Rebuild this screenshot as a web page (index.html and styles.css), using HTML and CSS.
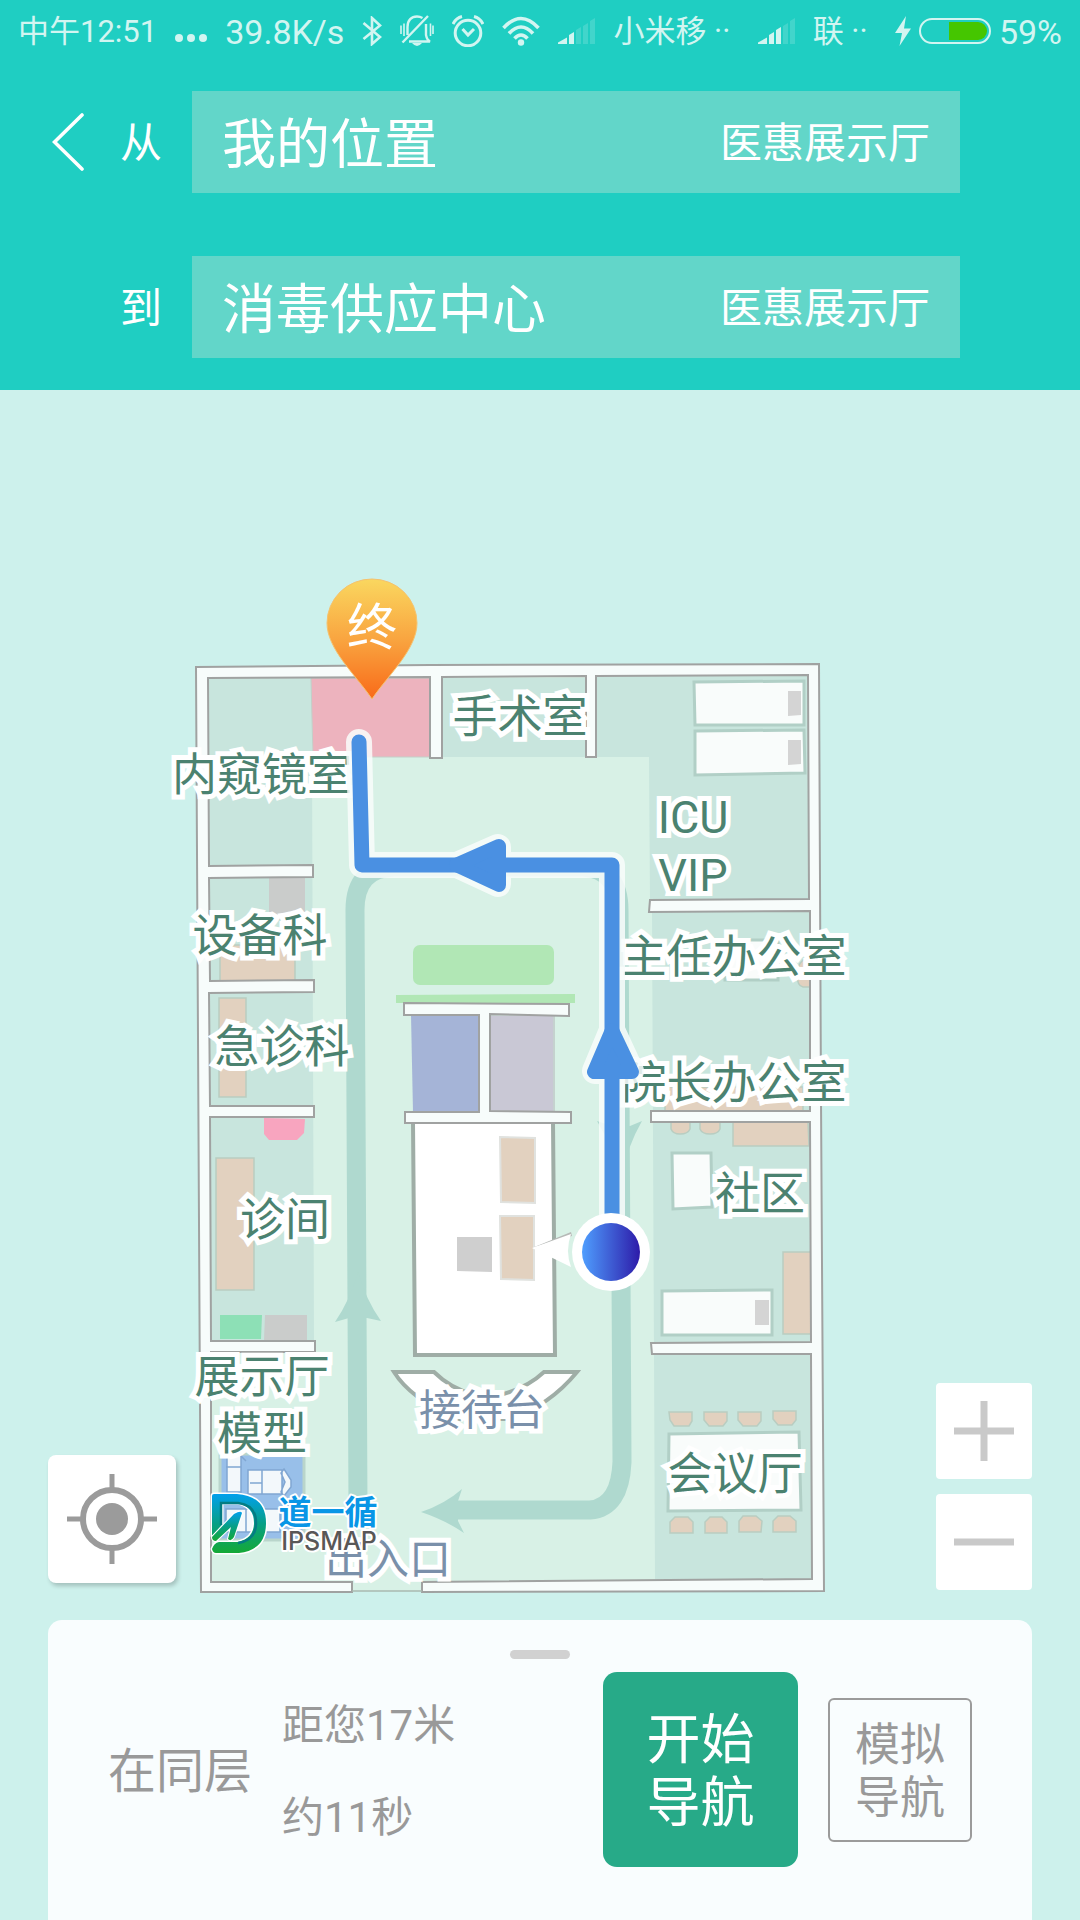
FILE: index.html
```html
<!DOCTYPE html>
<html lang="zh-CN">
<head>
<meta charset="utf-8">
<meta name="viewport" content="width=device-width, initial-scale=1">
<title>室内导航</title>
<link rel="stylesheet" href="styles.css">
</head>
<body>
<div class="app">
  <header class="header">
    <div class="status">
      <div class="status-group">
        <span>中午12:51</span>
        <svg class="icon-dots" viewBox="0 0 32 30" aria-hidden="true"><circle cx="4" cy="22" r="4"/><circle cx="16" cy="22" r="4"/><circle cx="28" cy="22" r="4"/></svg>
        <span class="num">39.8K/s</span>
        <svg class="icon-bt" viewBox="0 0 20 30" fill="none" stroke="currentColor" stroke-width="2.6" aria-hidden="true"><path d="M1.500 7L18 21L10 28V2L18 9.500L1.500 23"/></svg>
        <svg class="icon-bell" viewBox="0 0 34 32" fill="none" stroke="currentColor" stroke-width="2.400" aria-hidden="true"><path d="M2.500 27.500L28 1M7.500 20V12C7.500 5 11.500 1.500 17 1.500Q20 1.500 22.500 3M26 9V20Q27 25 30 26.500H9"/><path d="M1 10.500V19M4 8.500V21M30.500 8.500V21M33 10.500V19" stroke-width="1.600"/><path d="M12 28H22Q17 34 12 28" fill="currentColor" stroke="none"/></svg>
        <svg class="icon-alarm" viewBox="0 0 32 32" fill="none" stroke="currentColor" stroke-width="3" aria-hidden="true"><circle cx="16" cy="18" r="12.800"/><path d="M10.500 14L16 20L22 14M1 9Q4 3 10 1.500M31 9Q28 3 22 1.500"/></svg>
        <svg class="icon-wifi" viewBox="0 0 38 30" fill="none" stroke="currentColor" stroke-width="3.600" aria-hidden="true"><path d="M1.500 12Q19-7 36.500 12M7 17.500Q19 4.500 31 17.500M12.500 22.500Q19 15.500 25.500 22.500"/><circle cx="19" cy="26.500" r="3.200" fill="currentColor" stroke="none"/></svg>
        <svg class="icon-signal" viewBox="0 0 37 26" aria-hidden="true"><path d="M0 26L0 24.500L9 19.500V26ZM11 17L16 14V26H11Z"/><path opacity=".2" d="M18 12L23 9V26H18ZM25 8L30 5V26H25ZM32 3L37 0V26H32Z"/></svg>
        <span>小米移 ··</span>
      </div>
      <div class="status-group">
        <svg class="icon-signal" viewBox="0 0 37 26" aria-hidden="true"><path d="M0 26L0 24.500L9 19.500V26ZM11 17L16 14V26H11ZM18 12L23 9V26H18Z"/><path opacity=".2" d="M25 8L30 5V26H25ZM32 3L37 0V26H32Z"/></svg>
        <span>联 ··</span>
      </div>
      <div class="status-group power">
        <svg class="icon-bolt" viewBox="0 0 16 30" aria-hidden="true"><path d="M11 0L0 17H7L4.500 30L16 12.500H9Z"/></svg>
        <svg class="icon-battery" viewBox="0 0 72 26" aria-hidden="true"><rect x="1" y="1" width="70" height="24" rx="12" fill="none" stroke="currentColor" stroke-width="2"/><path d="M30 4H59A9 9 0 0 1 59 22H30Z" fill="#45c600"/></svg>
        <span class="num">59%</span>
      </div>
    </div>
    <form class="search">
      <div class="search-row">
        <button class="back" type="button" aria-label="返回"><svg viewBox="0 0 32 58" fill="none" stroke="currentColor" stroke-width="3.600" stroke-linecap="round"><path d="M30 2L2.500 29L30 56"/></svg></button>
        <label for="from">从</label>
        <div class="field"><input id="from" type="text" value="我的位置"><span>医惠展示厅</span></div>
      </div>
      <div class="search-row">
        <label for="to">到</label>
        <div class="field"><input id="to" type="text" value="消毒供应中心"><span>医惠展示厅</span></div>
      </div>
    </form>
  </header>

  <main class="map">
    <svg class="plan" viewBox="0 390 1080 1530" preserveAspectRatio="xMidYMin slice" role="img" aria-label="楼层平面图">
      <defs>
        <linearGradient id="pin" x1="0" y1="0" x2="0" y2="1"><stop offset="0" stop-color="#fad75f"/><stop offset=".5" stop-color="#f9a540"/><stop offset="1" stop-color="#f96a19"/></linearGradient>
        <linearGradient id="dot"><stop offset="0" stop-color="#4f9efe"/><stop offset="1" stop-color="#2d1ba9"/></linearGradient>
        <linearGradient id="brand" x1="0" y1="0" x2="0" y2="1"><stop offset="0" stop-color="#02a0ec"/><stop offset=".5" stop-color="#079f86"/><stop offset="1" stop-color="#14a936"/></linearGradient>
      </defs>

      <!-- floor and rooms -->
      <path fill="#d8f1e6" d="M197 667L819 665L823 1591L201 1591Z"/>
      <g fill="#c8e5dd">
        <path d="M208 678H312V757L314 1341H211Z"/>
        <path d="M442 678H586V757H442Z"/>
        <path d="M596 676H808V900H650L649 757H596Z"/>
        <path d="M652 912H811V1579H655Z"/>
      </g>
      <path fill="#edb3be" stroke="#c3cfc8" d="M311 678H430V757H313Z"/>

      <!-- corridor arrows -->
      <g fill="none" stroke="#afd9cf" stroke-width="19">
        <path d="M358 1505L355 910Q355 868 394 867H584Q619 870 619 910L622 1462Q620 1508 590 1510H455"/>
      </g>
      <path fill="#afd9cf" d="M358 1272Q366 1300 381 1321L367 1318H349L335 1322Q350 1300 358 1272ZM421 1512Q445 1504 462 1489L458 1501V1521L464 1533Q445 1520 421 1512ZM597 1121L612 1126H630L642 1121Q628 1145 620 1180Q612 1145 597 1121Z"/>

      <!-- furniture -->
      <g fill="#e2d1bf" stroke="#b9cdc1" stroke-width="1.500">
        <path d="M220 945H295V981H220ZM219 998H246V1097H219ZM216 1158H254V1290H216Z"/>
        <path d="M665 1087H803V1111H665ZM733 1122H808L809 1146H733ZM783 1252H811V1334H783Z"/>
        <path d="M671 1122H690V1129Q688 1134 680 1134Q673 1134 671 1129ZM700 1122H720V1129Q718 1134 710 1134Q702 1134 700 1129ZM810 960H803Q797 966 797 974Q797 986 803 987H810Z"/>
        <path d="M669 1412H692V1421L689 1426H674L670 1420ZM704 1412H727V1421L723 1426H709L704 1420ZM738 1412H761V1421L757 1426H743L738 1420ZM773 1411H796V1420L792 1425H778L773 1419Z"/>
        <path d="M670 1533V1522L675 1517H688L693 1522V1533ZM705 1533V1522L710 1517H722L727 1522V1533ZM739 1532V1521L743 1516H756L762 1521L761 1532ZM773 1532V1521L778 1516H790L796 1521V1532Z"/>
      </g>
      <g fill="#f9fcfb" stroke="#b1cfc6" stroke-width="3">
        <path d="M694 682L804 681V725H695ZM695 731L804 730L805 773L695 775ZM725 940H778V980H725ZM672 1153H711L712 1207L673 1209ZM662 1291L772 1290V1335H662ZM669 1434L799 1432L801 1510L668 1511Z"/>
      </g>
      <path fill="#d4d4d4" d="M788 691H801V715L788 716ZM788 740H801V764L788 765ZM755 1300H769V1325H755Z"/>
      <path fill="#cacccb" d="M269 878H305V920H269ZM265 1315H307V1340H264Z"/>
      <path fill="#8de0b6" d="M220 1315H262L261 1339H220Z"/>
      <path fill="#f8a5bf" d="M264 1118L305 1119L304 1133L297 1140H269L264 1134Z"/>

      <!-- exhibition model -->
      <path fill="#98bfe9" stroke="#b9d5cb" stroke-width="3" d="M220 1454H304V1540H220Z"/>
      <g fill="#f3f8fb" stroke="#80a6d2" stroke-width="1.500">
        <path d="M227 1455H241V1492H227ZM248 1470H282V1494H248ZM248 1470H262V1494H248ZM284 1469L291 1480V1487L284 1496L281 1492L285 1482L281 1473ZM226 1509H280V1532H226Z"/>
        <path d="M226 1467H241M250 1483H262M246 1509V1532M240 1455L246 1461"/>
      </g>

      <!-- centre block -->
      <rect x="413" y="945" width="141" height="40" rx="7" fill="#b1e7b5"/>
      <path fill="#b1e7b5" d="M396 995L575 994V1003H396Z"/>
      <path fill="#a5b4d7" d="M411 1015H480V1112H413Z"/>
      <path fill="#c9c8d5" stroke="#c5d2cf" stroke-width="2" d="M490 1015H554V1112H490Z"/>
      <path fill="#fff" stroke="#9fada6" stroke-width="4" d="M413 1122H553L555 1355H415Z"/>
      <path fill="#e2d1bf" stroke="#e0e2df" stroke-width="2" d="M500 1137L535 1138V1203L501 1202ZM500 1216H534V1280L501 1279Z"/>
      <path fill="#cfcfcf" d="M457 1237H492V1272L457 1271Z"/>
      <path fill="#fff" stroke="#9fada6" stroke-width="4" d="M394 1372H434Q451 1389 475 1395H500Q527 1388 544 1372H577Q550 1405 510 1419H456Q410 1398 394 1372Z"/>

      <!-- walls -->
      <g fill="#f7fcfb" stroke="#a0a2a1" stroke-width="2">
        <path fill-rule="evenodd" d="M196 667L430 665L819 664L821 1100L824 1591L422 1592V1582L812 1579L811 1354L652 1354L651 1343L811 1342L810 1122H651V1111H810V911L649 912L650 900L809 899L808 675L596 676V757H586V676L442 677V758L430 758V677L208 678L209 866L313 865V877L209 878L210 981L314 980V992L209 993L210 1106H314V1117H210L211 1341H315V1352H211V1582H352V1592H201Z"/>
        <path d="M404 1003L569 1004V1016L490 1014V1111L571 1112V1123H405V1112H479V1015H404Z"/>
      </g>
      <path d="M352 1591H422" stroke="#a9b8b1" stroke-width="1.500"/>

      <g class="labels">
        <text x="520" y="733">手术室</text>
        <text x="262" y="791">内窥镜室</text>
        <text x="693" y="833">ICU</text>
        <text x="693" y="891">VIP</text>
        <text x="734" y="973">主任办公室</text>
        <text x="734" y="1099">院长办公室</text>
        <text x="260" y="952">设备科</text>
        <text x="282" y="1063">急诊科</text>
        <text x="285" y="1236">诊间</text>
        <text x="262" y="1393">展示厅</text>
        <text x="262" y="1450">模型</text>
        <text x="760" y="1210">社区</text>
        <text x="735" y="1490">会议厅</text>
        <text class="minor" x="482" y="1425">接待台</text>
        <text class="minor" x="388" y="1574">出入口</text>
      </g>

      <!-- route -->
      <g stroke-linejoin="round" stroke-linecap="round">
        <g fill="#f9fdfc" stroke="#f9fdfc" opacity=".85">
          <path fill="none" stroke-width="26" d="M359 742L362 865H612L612 1250"/>
          <path stroke-width="26" d="M457 865L498 847V884ZM612 1030L595 1071H631Z"/>
        </g>
        <path fill="none" stroke="#4a90e2" stroke-width="15" d="M359 742L362 865H612L612 1250"/>
        <path fill="#4a90e2" stroke="#4a90e2" stroke-width="14" d="M456 865L499 846V885ZM612 1030L594 1072H632Z"/>
      </g>

      <!-- current position -->
      <path d="M532 1248L571 1232L572 1236Z" fill="#b6b9b7"/>
      <path fill="#fff" d="M532 1248L571 1234Q565 1251 571 1267Z"/>
      <circle cx="611" cy="1252" r="39" fill="#fff"/>
      <circle cx="611" cy="1252" r="29" fill="url(#dot)"/>

      <!-- destination -->
      <path fill="url(#pin)" stroke="#f5c26e" stroke-width="1" d="M372 699C355 674 327 649 327 623A45 44 0 0 1 417 623C417 649 389 674 372 699Z"/>
      <text class="pin-text" x="372" y="645">终</text>

      <!-- map provider -->
      <g stroke="#fff" stroke-width="3" paint-order="stroke" stroke-linejoin="round">
        <path fill="url(#brand)" fill-rule="evenodd" d="M212 1496Q212 1494 214 1494H237Q266 1496 266 1523Q266 1550 239 1553H216Q213 1553 212 1549Q214 1543 219 1542H238Q254 1538 254 1523Q254 1507 238 1503H222V1525L212 1536Z"/>
        <path fill="url(#brand)" stroke-width="2" d="M212 1537L234 1514Q241 1510 242 1513L234 1537Q231 1542 228 1539L231 1527L216 1541Q212 1541 212 1537Z"/>
      </g>
      <path fill="none" stroke="#047c83" stroke-width="2.500" d="M221 1525V1503H238Q256 1505 256 1523Q256 1540 238 1543"/>
      <text class="brand-cn" x="328" y="1524">道一循</text>
      <text class="brand-en" x="329" y="1550">IPSMAP</text>
    </svg>

    <div class="controls">
      <button class="control locate" type="button" aria-label="定位"><svg viewBox="0 0 90 90" fill="none" stroke="#9b9b9b"><circle cx="45" cy="45" r="29" stroke-width="6"/><circle cx="45" cy="45" r="16" fill="#9b9b9b" stroke="none"/><path d="M45 0V14M45 76V90M0 45H14M76 45H90" stroke-width="5"/></svg></button>
      <div class="zoom">
        <button class="control" type="button" aria-label="放大"><svg viewBox="0 0 60 60"><path d="M0 30H60M30 0V60" stroke="#c9c9c9" stroke-width="7"/></svg></button>
        <button class="control" type="button" aria-label="缩小"><svg viewBox="0 0 60 60"><path d="M0 30H60" stroke="#c9c9c9" stroke-width="7"/></svg></button>
      </div>
    </div>

    <section class="sheet">
      <div class="handle"></div>
      <div class="summary">
        <p class="floor">在同层</p>
        <div class="metrics"><p>距您17米</p><p>约11秒</p></div>
        <button class="start" type="button">开始<br>导航</button>
        <button class="simulate" type="button">模拟<br>导航</button>
      </div>
    </section>
  </main>
</div>
</body>
</html>
```
FILE: styles.css
```css
* { box-sizing: border-box; }

body {
  margin: 0;
  background: #cdf1ec;
  font-family: Roboto, "Noto Sans CJK SC", sans-serif;
}

p { margin: 0; }

button, input {
  margin: 0;
  padding: 0;
  border: 0;
  background: none;
  color: inherit;
  font: inherit;
}

svg { display: block; }

.app {
  display: flex;
  flex-direction: column;
  min-height: 100vh;
}

/* header */
.header {
  padding-bottom: 32px;
  background: #1fcec2;
  color: #fff;
}

.status {
  display: flex;
  align-items: center;
  justify-content: space-between;
  height: 61px;
  padding: 0 18px;
  color: #d2f5f1;
  font-size: 31px;
  line-height: 36px;
  white-space: nowrap;
}

.status-group {
  display: flex;
  align-items: center;
  gap: 18px;
}

.status span { padding-top: 2px; }
.status .num { font-size: 34px; }
.status svg { fill: currentColor; }
.status svg[fill="none"] { fill: none; }
.status .power { gap: 8px; }
.icon-dots { width: 32px; height: 30px; }
.icon-bt { width: 20px; height: 30px; }
.icon-bell { width: 34px; height: 32px; }
.icon-alarm { width: 32px; height: 32px; }
.icon-wifi { width: 38px; height: 30px; }
.icon-signal { width: 37px; height: 26px; }
.icon-bolt { width: 16px; height: 30px; }
.icon-battery { width: 72px; height: 26px; }

.search {
  display: flex;
  flex-direction: column;
  gap: 63px;
  padding: 30px 120px 0 48px;
}

.search-row {
  display: flex;
  align-items: center;
  font-size: 42px;
  line-height: 60px;
}

.search-row label {
  margin: 0 30px 0 34px;
  padding-top: 4px;
}

.search-row:not(:first-child) label { margin-left: 72px; }

.back {
  width: 38px;
  padding-left: 4px;
}

.back svg { width: 32px; height: 58px; }

.field {
  display: flex;
  flex: 1;
  align-items: center;
  min-width: 0;
  height: 102px;
  padding: 0 30px;
  background: #62d6c9;
}

.field input {
  flex: 1;
  min-width: 0;
  height: 80px;
  padding-bottom: 4px;
  font-size: 54px;
}

.field span { padding-top: 4px; }

/* map */
.map {
  position: relative;
  display: flex;
  flex: 1;
  flex-direction: column;
  justify-content: flex-end;
  min-height: 1530px;
  padding: 0 48px;
  overflow: hidden;
}

.plan {
  position: absolute;
  inset: 0;
  width: 100%;
  height: 100%;
}

.labels text {
  fill: #4b8270;
  stroke: #fff;
  stroke-width: 10px;
  stroke-linejoin: miter;
  stroke-miterlimit: 3;
  paint-order: stroke;
  font-size: 45px;
  text-anchor: middle;
}

.labels .minor {
  fill: #7a90aa;
  font-size: 42px;
}

.pin-text {
  fill: #fff;
  font-size: 50px;
  text-anchor: middle;
}

.brand-cn, .brand-en {
  stroke: #fff;
  stroke-width: 4px;
  stroke-linejoin: round;
  paint-order: stroke;
  text-anchor: middle;
}

.brand-cn {
  fill: #0996e6;
  font-size: 33px;
  font-weight: 700;
}

.brand-en {
  fill: #595757;
  font-family: Inter, sans-serif;
  font-size: 25px;
  font-weight: 500;
}

.controls {
  position: relative;
  display: flex;
  align-items: flex-end;
  justify-content: space-between;
  margin-bottom: 30px;
}

.control {
  display: grid;
  place-items: center;
  width: 96px;
  height: 96px;
  border-radius: 4px;
  background: #fff;
}

.control svg { width: 60px; height: 60px; }

.locate {
  width: 128px;
  height: 128px;
  margin-bottom: 7px;
  border-radius: 8px;
  box-shadow: 2px 3px 4px rgba(0, 0, 0, 0.2);
}

.locate svg { width: 90px; height: 90px; }

.zoom {
  display: grid;
  gap: 15px;
}

/* bottom sheet */
.sheet {
  position: relative;
  padding: 30px 60px 53px;
  border-radius: 14px 14px 0 0;
  background: #f9fdfe;
  color: #999;
}

.handle {
  width: 60px;
  height: 9px;
  margin: 0 auto 13px;
  border-radius: 5px;
  background: #d1d1d1;
}

.summary {
  display: flex;
  align-items: center;
  gap: 30px;
}

.floor {
  padding-top: 4px;
  font-size: 48px;
  line-height: 72px;
}

.metrics {
  display: grid;
  flex: 1;
  gap: 32px;
  padding-top: 4px;
  font-size: 42px;
  line-height: 60px;
}

.start {
  width: 195px;
  height: 195px;
  padding-top: 4px;
  border-radius: 14px;
  background: #27aa88;
  color: #fff;
  font-size: 54px;
  line-height: 63px;
}

.simulate {
  width: 144px;
  height: 144px;
  padding-top: 4px;
  border: 2px solid #9b9b9b;
  border-radius: 6px;
  font-size: 45px;
  line-height: 53px;
}
```
